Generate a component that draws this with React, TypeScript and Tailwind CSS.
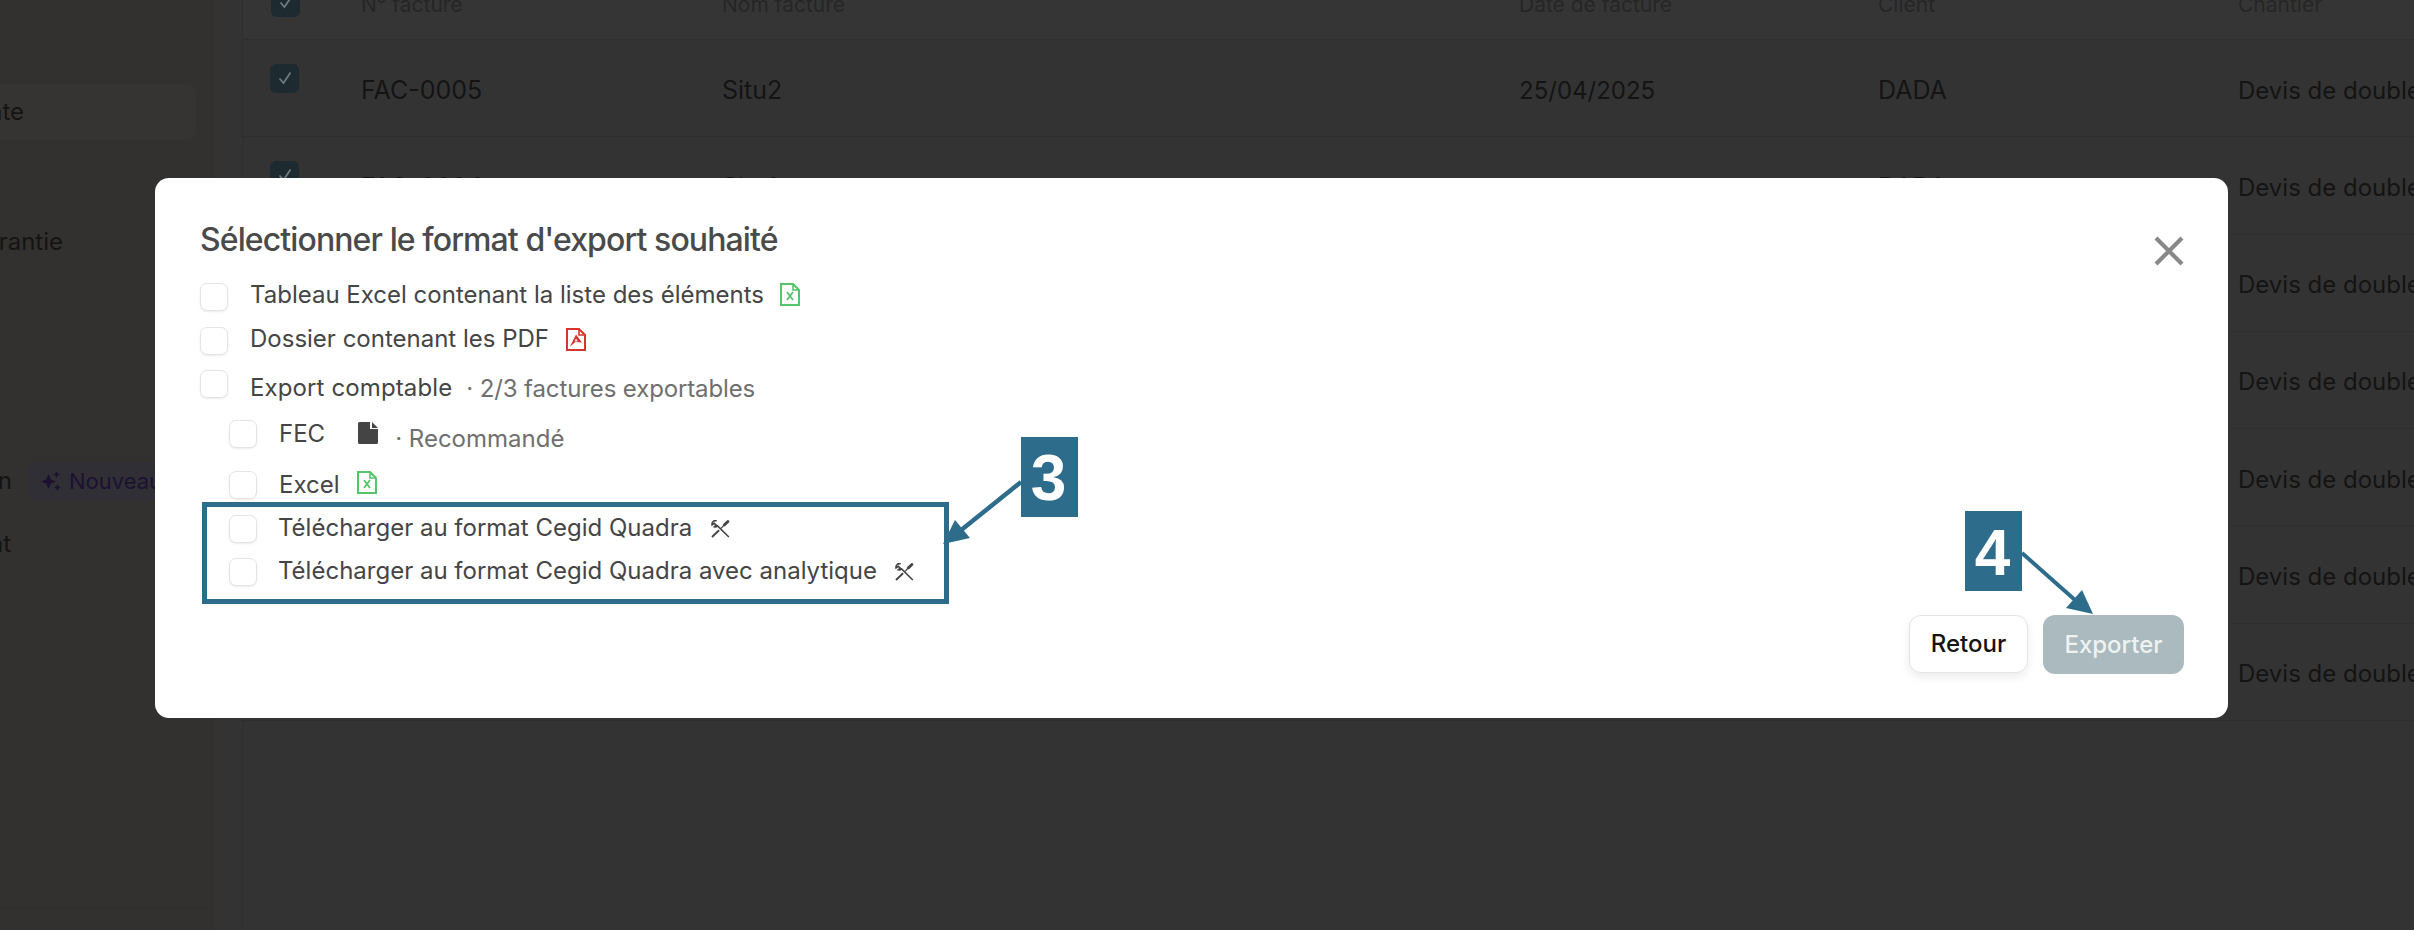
const font = { fontFamily: "Inter, 'Noto Sans', sans-serif" };

const rows = [
  ["FAC-0005", "Situ2", "25/04/2025", "DADA"],
  ["FAC-0004", "Situ1", "25/04/2025", "DADA"],
  ["FAC-0003", "Acompte", "24/04/2025", "DADA"],
  ["FAC-0002", "Acompte", "24/04/2025", "DADA"],
  ["FAC-0001", "Acompte", "24/04/2025", "DADA"],
  ["AV-0002", "Avoir", "23/04/2025", "DADA"],
  ["AV-0001", "Avoir", "23/04/2025", "DADA"],
];

const cols = "grid grid-cols-[118px_361px_797px_359px_360px_400px] items-center";

function TableCheck() {
  return (
    <div className="w-[29px] h-[29px] rounded-[6px] bg-[#1d2a30] flex items-center justify-center">
      <svg width="18" height="18" viewBox="0 0 18 18" fill="none">
        <path d="M3.5 9.5 7.5 14 14.5 3.5" stroke="#6f7a7e" strokeWidth="1.8" />
      </svg>
    </div>
  );
}

function Box() {
  return <div className="w-[28px] h-[28px] shrink-0 rounded-[7px] bg-white border border-[#e6e4e1] shadow-[0_1px_2px_rgba(0,0,0,0.08)]" />;
}

function ExcelIcon() {
  return (
    <svg width="20" height="23" viewBox="0 0 20 23" fill="none" className="shrink-0 -translate-y-[3px]">
      <path d="M1 1h12l6 6v15H1z" stroke="#55c46a" strokeWidth="2" fill="#fff" />
      <path d="M13 1v6h6" stroke="#55c46a" strokeWidth="1.6" fill="none" />
      <path d="M7 9l6 8M13 9l-6 8" stroke="#55c46a" strokeWidth="1.8" />
    </svg>
  );
}

function PdfIcon() {
  return (
    <svg width="20" height="23" viewBox="0 0 20 23" fill="none" className="shrink-0 -translate-y-[2px]">
      <path d="M1 1h12l6 6v15H1z" stroke="#d5352f" strokeWidth="2" fill="#fff" />
      <path d="M13 1v6h6" stroke="#d5352f" strokeWidth="1.6" fill="none" />
      <path d="M10 6.500 4 18.500l5.500-4.500 6.500.5z" fill="#d5352f" />
      <path d="M10 10.500 8.600 13.300l3.200.2z" fill="#fff" />
    </svg>
  );
}

function DocIcon() {
  return (
    <svg width="20" height="22" viewBox="0 0 20 22" className="shrink-0">
      <path d="M0 1.500A1.500 1.500 0 0 1 1.500 0H12v7h8v13.500a1.500 1.500 0 0 1-1.500 1.500h-17A1.500 1.500 0 0 1 0 20.500z" fill="#444" />
      <path d="M14 0l6 6h-6z" fill="#444" />
    </svg>
  );
}

function ToolsIcon() {
  return (
    <svg width="19" height="18" viewBox="0 0 20 19" fill="none" className="shrink-0">
      <path d="M6 .9a3.700 3.700 0 0 0-4.900 4.300l2.300-1.700 1.900 1.800-1.900 1.800a3.700 3.700 0 0 0 3.500-.9L18.800 18" stroke="#444" strokeWidth="1.700" />
      <path d="M1 18l7.500-7.200" stroke="#444" strokeWidth="2" />
      <path d="M10.500 8.800l2.500-2.400" stroke="#444" strokeWidth="1.300" />
      <path d="M14 5.200l3.800-3.600" stroke="#444" strokeWidth="3" strokeLinecap="round" />
    </svg>
  );
}

function Sparkle() {
  return (
    <svg width="20" height="20" viewBox="0 0 20 20" fill="#1c1230" className="shrink-0">
      <path d="M7.500 3l2.200 5.300L15 10.500l-5.300 2.200L7.500 18l-2.200-5.300L0 10.500l5.300-2.200z" />
      <path d="M15.500 0l1 2.500 2.500 1-2.500 1-1 2.500-1-2.500-2.500-1 2.500-1z" />
      <path d="M16.500 13l1 2.500 2.500 1-2.500 1-1 2.500-1-2.500-2.500-1 2.500-1z" />
    </svg>
  );
}

export default function App() {
  return (
    <div className="relative w-[2414px] h-[930px] overflow-hidden bg-[#333333] flex text-[24px] text-[#141414]" style={font}>
      {/* Sidebar */}
      <aside className="w-[213px] h-full shrink-0 bg-[#323130] border-r border-[#2f2e2c] flex flex-col">
        <div className="mt-[84px] w-[196px] h-[56px] rounded-r-[8px] bg-[#353432] flex items-center">
          <div className="w-[24px] flex justify-end whitespace-nowrap">Vente</div>
        </div>
        <div className="mt-[74px] h-[56px] flex items-center">
          <div className="w-[63px] flex justify-end whitespace-nowrap">Garantie</div>
        </div>
        <div className="mt-[183px] h-[56px] flex items-center">
          <div className="w-[12px] flex justify-end whitespace-nowrap">Situation</div>
          <div className="ml-[15px] h-[38px] pl-[14px] pr-[12px] rounded-[10px] bg-[#302f36] flex items-center gap-[8px] text-[#1c1230] text-[22px]">
            <Sparkle />
            Nouveau
          </div>
        </div>
        <div className="mt-[7px] h-[56px] flex items-center">
          <div className="w-[11px] flex justify-end whitespace-nowrap">Paiement</div>
        </div>
        <div className="mt-auto mb-[21px] border-b border-[#2f2e2c]" />
      </aside>

      {/* Table */}
      <main className="ml-[29px] flex-1 min-w-0 border-l border-[#2f2f2f] -mt-[30px]">
        <div className={cols + " h-[70px] border-b border-[#2f2f2f] bg-[#353535] text-[#262626] text-[21px]"}>
          <div className="pl-[28px] -mt-[5px]"><TableCheck /></div>
          <div>N° facture</div>
          <div>Nom facture</div>
          <div>Date de facture</div>
          <div>Client</div>
          <div>Chantier</div>
        </div>
        {rows.map((r) => (
          <div key={r[0]} className={cols + " h-[97.25px] pt-[5px] border-b border-[#2f2f2f] text-[25px]"}>
            <div className="pl-[27px] -mt-[25px]"><TableCheck /></div>
            <div>{r[0]}</div>
            <div>{r[1]}</div>
            <div className="text-[24px]">{r[2]}</div>
            <div>{r[3]}</div>
            <div className="whitespace-nowrap text-[24px]">Devis de double vitrage</div>
          </div>
        ))}
      </main>

      {/* Modal */}
      <div className="absolute left-[155px] top-[178px] w-[2073px] h-[540px] rounded-[14px] bg-white flex flex-col pl-[45px] pr-[44px] pb-[44px] text-[#454545]">
        <h2 className="mt-[44px] h-[36px] leading-[36px] text-[32px] font-medium tracking-[-0.028em] text-[#4a4a4a]">Sélectionner le format d'export souhaité</h2>

        <div className="mt-[25px] flex items-center h-[28px]">
          <Box />
          <span className="ml-[22px] -mt-[4px]">Tableau Excel contenant la liste des éléments</span>
          <span className="ml-[16px]"><ExcelIcon /></span>
        </div>
        <div className="mt-[16px] flex items-center h-[28px]">
          <Box />
          <span className="ml-[22px] -mt-[4px]">Dossier contenant les PDF</span>
          <span className="ml-[17px]"><PdfIcon /></span>
        </div>
        <div className="mt-[15px] flex items-center h-[28px]">
          <Box />
          <span className="ml-[22px] mt-[7px] tracking-[0.005em]">Export comptable</span>
          <span className="ml-[14px] mt-[9px] text-[#6f6f6f] tracking-[-0.005em]">· 2/3 factures exportables</span>
        </div>
        <div className="mt-[22px] ml-[29px] flex items-center h-[28px]">
          <Box />
          <span className="ml-[22px] -mt-[1px]">FEC</span>
          <span className="ml-[33px] -mt-[3px]"><DocIcon /></span>
          <span className="ml-[17px] mt-[9px] text-[#6f6f6f]">· Recommandé</span>
        </div>
        <div className="mt-[23px] ml-[29px] flex items-center h-[28px]">
          <Box />
          <span className="ml-[22px]">Excel</span>
          <span className="ml-[17px]"><ExcelIcon /></span>
        </div>

        <div className="mt-[3px] ml-[2px] w-[747px] h-[102px] border-[5px] border-[#2e6c8c] pl-[22px] pt-[8px] flex flex-col gap-[15px]">
          <div className="flex items-center h-[28px]">
            <Box />
            <span className="ml-[21px] -mt-[2px]">Télécharger au format Cegid Quadra</span>
            <span className="ml-[19px]"><ToolsIcon /></span>
          </div>
          <div className="flex items-center h-[28px]">
            <Box />
            <span className="ml-[21px] -mt-[2px]">Télécharger au format Cegid Quadra avec analytique</span>
            <span className="ml-[18px]"><ToolsIcon /></span>
          </div>
        </div>

        <div className="mt-auto flex justify-end gap-[15px]">
          <button className="w-[119px] h-[58px] rounded-[12px] bg-white border border-[#e4e4e4] shadow-[0_4px_10px_rgba(0,0,0,0.08)] text-[#141414] font-medium text-[24px]">Retour</button>
          <button className="w-[141px] h-[59px] rounded-[12px] bg-[#abbabe] text-[#eef2f3] font-medium text-[24px]">Exporter</button>
        </div>

        <button className="absolute top-[58px] right-[44px] w-[30px] h-[30px]" aria-label="Fermer">
          <svg width="30" height="30" viewBox="0 0 30 30" fill="none">
            <path d="M2 2l26 26M28 2 2 28" stroke="#888888" strokeWidth="4.200" />
          </svg>
        </button>
      </div>

      {/* Annotations */}
      <svg className="absolute inset-0 pointer-events-none" width="2414" height="930" viewBox="0 0 2414 930" fill="none">
        <path d="M1021 482 960 531" stroke="#2e6c8c" strokeWidth="4.500" />
        <path d="M943 544 955 520 970 538z" fill="#2e6c8c" />
        <path d="M2022 553 2075 600" stroke="#2e6c8c" strokeWidth="4" />
        <path d="M2093 614 2066 608 2082 590z" fill="#2e6c8c" />
      </svg>
      <div className="absolute left-[1021px] top-[437px] w-[57px] h-[80px] pt-[2px] pr-[2px] bg-[#2e6c8c] flex items-center justify-center text-white font-bold text-[64px]" style={{ fontFamily: "'Liberation Sans', sans-serif" }}>3</div>
      <div className="absolute left-[1965px] top-[511px] w-[57px] h-[80px] pt-[3px] pr-[2px] bg-[#2e6c8c] flex items-center justify-center text-white font-bold text-[64px]" style={{ fontFamily: "'Liberation Sans', sans-serif" }}>4</div>
    </div>
  );
}
